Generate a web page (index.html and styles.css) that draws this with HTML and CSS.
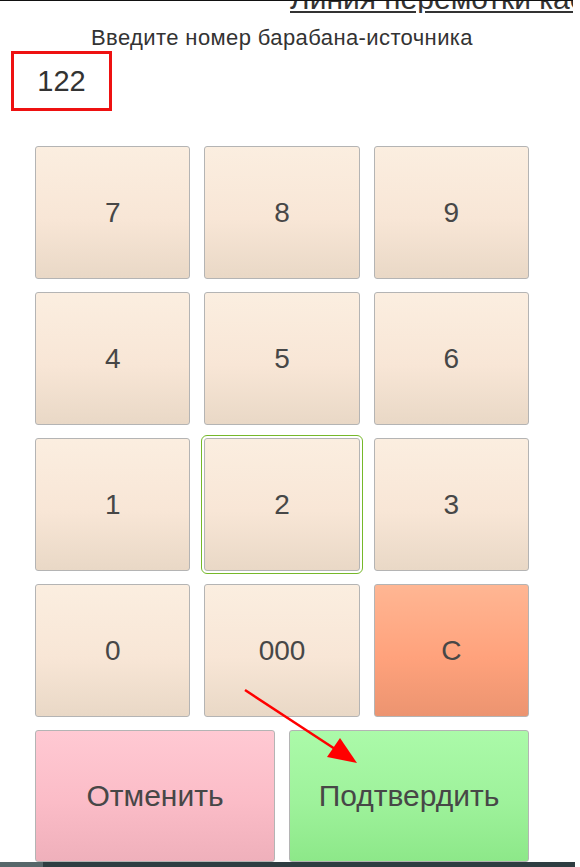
FILE: index.html
```html
<!DOCTYPE html>
<html lang="ru">

<head>
    <meta charset="UTF-8">
    <title>Линия перемотки кассет</title>
    <link rel="stylesheet" href="styles.css">
</head>

<body>
    <header class="titleBar">
        <span class="titleText">Линия перемотки кас</span>
    </header>
    <main class="page">
        <div class="prompt">Введите номер барабана-источника</div>
        <div class="display">122</div>

        <div class="keypad">
            <button type="button" class="key">7</button>
            <button type="button" class="key">8</button>
            <button type="button" class="key">9</button>
            <button type="button" class="key">4</button>
            <button type="button" class="key">5</button>
            <button type="button" class="key">6</button>
            <button type="button" class="key">1</button>
            <button type="button" class="key key-focus">2</button>
            <button type="button" class="key">3</button>
            <button type="button" class="key">0</button>
            <button type="button" class="key">000</button>
            <button type="button" class="key key-clear">C</button>
        </div>

        <div class="actions">
            <button type="button" class="key key-cancel">Отменить</button>
            <button type="button" class="key key-ok">Подтвердить</button>
        </div>

        <!-- annotation arrow drawn over the screenshot -->
        <svg class="arrow" width="130" height="90" viewBox="0 0 130 90">
            <line x1="5" y1="4" x2="95" y2="63" stroke="#f00" stroke-width="2.5"/>
            <polygon points="117,77 87,71 100,52" fill="#f00"/>
        </svg>
    </main>
    <div class="taskbar"><span class="taskbarStart"></span></div>
</body>

</html>
```

FILE: styles.css
```css
body {
    margin: 0;
    background-color: #fff;
    font-family: "Liberation Sans", Arial, sans-serif;
    color: #333;
}

.titleBar {
    height: 12px;
    overflow: hidden;
    border-top: 1px solid #111;
    margin-right: 7px;
    white-space: nowrap;
    padding-left: 290px;
}

.titleText {
    display: block;
    font-size: 30px;
    line-height: 30px;
    margin-top: -17px;
    text-decoration: underline;
    color: #333;
}

.page {
    position: relative;
    padding-top: 12px;
}

.prompt {
    width: 494px;
    margin-left: 35px;
    text-align: center;
    font-size: 22px;
    line-height: 26px;
    letter-spacing: 0.4px;
    color: #333;
}

.display {
    box-sizing: border-box;
    width: 101px;
    height: 60px;
    margin-left: 11px;
    border: 3px solid #ee1111;
    font-size: 29px;
    line-height: 54px;
    text-align: center;
    color: #333;
}

.keypad {
    display: grid;
    width: 494px;
    grid-template-columns: repeat(3, 1fr);
    grid-auto-rows: 133px;
    column-gap: 14px;
    row-gap: 13px;
    margin: 35px 0 0 35px;
}

.actions {
    display: grid;
    width: 494px;
    grid-template-columns: repeat(2, 1fr);
    grid-auto-rows: 132px;
    column-gap: 14px;
    margin: 13px 0 0 35px;
}

.key {
    box-sizing: border-box;
    border: 1px solid #b4b4b4;
    border-radius: 3px;
    background: linear-gradient(#fbeee0, #f8e6d6 55%, #e9d8c6);
    font-family: "Liberation Sans", Arial, sans-serif;
    font-size: 28px;
    color: #474747;
    padding: 0;
    cursor: pointer;
}

.key-focus {
    outline: 1px solid #76b82a;
    outline-offset: 2px;
}

.key-clear {
    background: linear-gradient(#ffb693, #ffa27c 55%, #ec9470);
}

.key-cancel {
    font-size: 30px;
    background: linear-gradient(#ffc9d3, #fbbcc7 55%, #efb0bb);
}

.key-ok {
    font-size: 30px;
    background: linear-gradient(#abfaa9, #9ef29b 55%, #8de889);
}

.arrow {
    position: absolute;
    left: 240px;
    top: 673px;
}

.taskbar {
    height: 5px;
    margin-right: 5px;
    background-color: #2e3d41;
    display: flex;
}

.taskbarStart {
    width: 43px;
    background-color: #56676a;
}
```
